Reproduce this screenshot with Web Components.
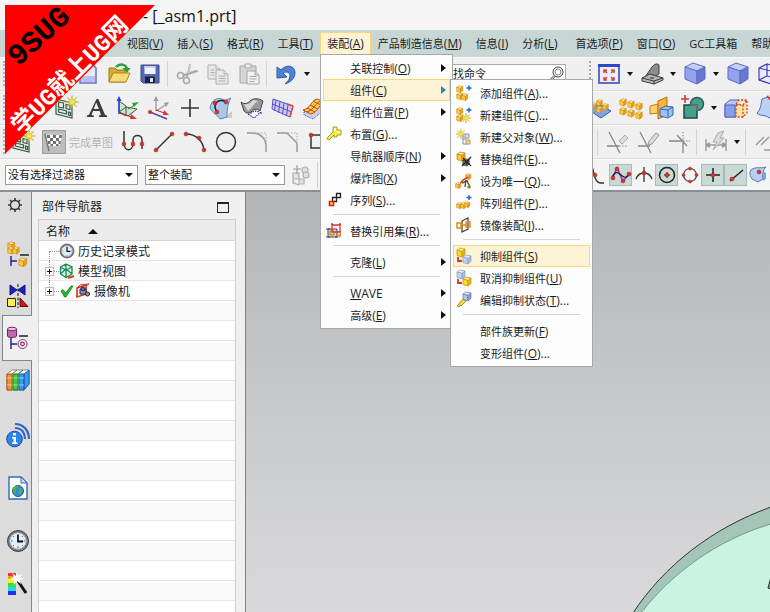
<!DOCTYPE html>
<html lang="zh-CN">
<head>
<meta charset="utf-8">
<title>[_asm1.prt]</title>
<style>
  html, body { margin: 0; height: 100%; }
  body {
    font-family: "Open Sans", "Noto Sans CJK SC", sans-serif;
    font-size: 12px;
    color: #1c1c1c;
    overflow: hidden;
    background: #f0f0f0;
  }
</style>
</head>
<body>
<cad-app></cad-app>

<script>
/* ---------- icon drawings ---------- */
const cube = (x, y, s, a = '#fff0a0', b = '#ffc938', c = '#e9a41c', k = '#cc8814') =>
  `<g transform="translate(${x} ${y}) scale(${s})" stroke="${k}" stroke-width=".8" stroke-linejoin="round">
   <path fill="${a}" d="M1 3 4 1 9 2 6 4.5z"/><path fill="${b}" d="M1 3 6 4.5 6 10 1 8.5z"/><path fill="${c}" d="M6 4.5 9 2 9 7.5 6 10z"/></g>`;
const star = (x, y, s = 1) =>
  `<g transform="translate(${x} ${y}) scale(${s})"><path fill="#f6e94a" stroke="#b3a22c" stroke-width=".5" d="M0-7 1-2 5-5 2-1 7 0 2 1 5 5 1 2 0 7-1 2-5 5-2 1-7 0-2-1-5-5-1-2z"/></g>`;
const dot = (x, y, r = 2) => `<circle cx="${x}" cy="${y}" r="${r}" fill="#d5332b" stroke="#8f1d18" stroke-width=".4"/>`;
const plus = (x, y, c = '#1560e0') => `<path d="M${x - 2.5} ${y}h5M${x} ${y - 2.5}v5" stroke="${c}" stroke-width="1.4"/>`;
const bigCube = `<g stroke="#5e6bc4" stroke-linejoin="round"><path fill="#c3cdf8" d="M2 5 10 1 22 5 14 9z"/><path fill="#93a4ec" d="M2 5 14 9 14 22 2 17z"/><path fill="#6678d0" d="M14 9 22 5 22 17 14 22z"/></g>`;
const clockFace = `<circle cx="12" cy="12" r="10.500" fill="#777" stroke="#444"/><circle cx="12" cy="12" r="8.300" fill="#e4eefb" stroke="#9aa" />
  <path d="M12 5v1.500M12 17.500V19M5 12h1.500M17.500 12H19M7 7l.8.8M17 7l-.8.8M7 17l.8-.8M17 17l-.8-.8" stroke="#456"/><path d="M12 6v6.500h5" fill="none" stroke="#111" stroke-width="1.800"/>`;

const ICONS = {
  newfile: [24, `<path fill="#e8e9fb" stroke="#6a6ec0" stroke-width="1.500" d="M4 2h12l4 4v15H4z"/><path fill="#b9bdf0" d="M5 14h14v6H5z"/>`],
  open: [24, `<path fill="#d9a92c" stroke="#9c7a1c" d="M2 20V6h6l2 2h8v12z"/><path fill="#f7dc74" stroke="#a98528" d="M2 20 6 11h17l-4 9z"/><path fill="none" stroke="#2fa03a" stroke-width="2.500" d="M9 5c4-4 10-3 11 2"/><path fill="#2fa03a" d="M15.500 6h8L20 11z"/>`],
  save: [24, `<path fill="#5468b8" stroke="#3a4a8c" d="M3 3h18v18H5l-2-2z"/><path fill="#f2f4fa" d="M6.500 4h11v8h-11z"/><path fill="#c9cfe6" d="M6.500 4h11v2h-11z"/><path fill="#1c2440" d="M7 14.500h10V21H7z"/><path fill="#dde" d="M12 16h3v4h-3z"/>`],
  cut: [24, `<g fill="none" stroke="#a9a9a9" stroke-width="1.600"><circle cx="5.500" cy="13.500" r="3"/><circle cx="11.500" cy="18.500" r="3"/><path d="m8.500 13 13-4.500M12 15.500 15 2M8 14l15-5"/></g><path d="M13 12 14 3l2-1-1 8z" fill="#ccc"/>`],
  copy: [24, `<g fill="#e9e9e9" stroke="#b0b0b0"><path d="M2 3h8l4 4v10H2z"/><path d="M10 3v4h4"/><path d="M10 8h8l4 4v10H10z"/><path d="M18 8v4h4M12.500 14h7M12.500 16.500h7M12.500 19h7M4.500 8h4M4.500 10.500h4M4.500 13h4"/></g>`],
  paste: [24, `<g fill="#d6d6d6" stroke="#a6a6a6"><path d="M3 4h16v17H3z"/><path fill="#eee" d="M8 2h6v4H8z"/><path fill="#f2f2f2" d="M10 9h8l4 4v9H10z"/><path d="M18 9v4h4M12.500 14.500h7M12.500 17h7M12.500 19.500h5"/></g>`],
  undo: [24, `<path fill="#4d82d6" stroke="#2a5cab" d="M3 5v11l10-1-4-4c4-2 7-1 7 3 0 3-2 5-5 8 6-2 10-6 10-11C21 3 12 2 7 8z"/>`],
  fit: [24, `<path fill="#edf0fc" stroke="#5b6bd0" stroke-width="2" d="M2 3h20v18H2z"/><path fill="#2f48c8" d="M1 2h22v3H1z"/><path stroke="#d8452c" stroke-width="1.500" fill="none" d="m10 11-3-3m0 3V8h3M14 11l3-3m-3 0h3V11M10 15l-3 3m0-3v3h3M14 15l3 3m0-3v3h-3"/>`],
  bracket: [24, `<path fill="#8b8b8b" stroke="#3c3c3c" d="M5 15 12 5c2-3 6-4 7-2v9l-8 5z"/><path fill="#b5b5b5" stroke="#3c3c3c" d="M2 16 10 12l13 4v2L14 22 2 19z"/><path d="m2 16 12 3 9-3M14 19v3" fill="none" stroke="#3c3c3c"/><ellipse cx="12" cy="16" rx="2.500" ry="1" fill="#666"/>`],
  cube: [24, bigCube],
  wirecube: [24, `<path fill="#e8eaff" stroke="#3f3fb8" stroke-width="1.200" d="M2 6 10 2 22 5 22 17 14 22 2 18zM2 6l12 3 8-4M14 9v13M10 2v12L2 18M10 14l12 3"/>`],
  sketch: [24, `<g fill="#e3efe6" stroke="#3c5a49" stroke-width="1.200"><path d="M2 3 18 7v15L2 18z"/><path d="M4.500 6v5l5 1V7zM12 8.500v4l4 1v-4zM4.500 13v3l8 2v-3zM14.500 16v3l2 .5v-3z"/></g>${star(18, 6, .95)}`],
  letter: [24, `<path fill="#3c3c3c" d="M2 21v-1.500l2-.8L11.500 3h1.800l6.700 15.700 2 .8V21h-8v-1.500l2-.6-1.400-4H8L6.500 19l2.300.5V21zM8.700 13h5.200l-2.700-6.600z"/>`],
  datumcsys: [24, `<path fill="#cfe3d2" stroke="#40584a" d="M3 5l7 5v10l-7-4zM3 16l7-5 11 2-9 7z"/><path d="M3 18V4" stroke="#2340d8" stroke-width="1.500"/><path fill="#2340d8" d="m.5 5 2.500-5 2.500 5z"/><path d="m3 17 13 4" stroke="#b02a2a"/><path fill="#d83a30" d="m15 18 6 5h-7z"/><path d="m12 13 7-4" stroke="#2c8f38"/><path fill="#2ca038" d="m16 7 7-1-5 5z"/>`],
  csysgray: [24, `<path d="M9 15V2M9 15l11-7" stroke="#999" stroke-width="1.300"/><path fill="#999" d="m6.500 5 2.500-5 2.500 5zM17 7l5-1-3 5z"/><path d="M9 14l11 4" stroke="#b02a2a"/><path fill="#d83a30" d="m17 14 5 5-6 0z"/><path d="M3 16l17 7" stroke="#6a3fa8" stroke-width="1.500"/>${dot(3, 16, 1.8)}`],
  point: [24, `<path d="M3 12h18M12 3v18" stroke="#333" stroke-width="1.600"/>`],
  curveface: [24, `<path fill="#aaa" opacity=".5" d="M15 22 23 15v7z"/><path fill="#a9c8ec" stroke="#5f83b2" d="M1 12C2 4 9 1 13 3c3 2 6 0 9-1-3 4-4 12-4 19l-7 2C9 19 4 18 1 12z"/><path fill="none" stroke="#222" stroke-width="1.500" d="M17 6C9 2 3 8 8 16"/>${dot(17, 6)}${dot(6, 7)}${dot(8, 16)}`],
  flatten: [24, `<path fill="#9a9a9a" stroke="#444" d="M1 6c4 3 7 1 9-1 3-3 9-3 13 0l-3 10c-3-3-7-2-9 1-3 2-5 1-7-1z"/><path fill="#d7d7d7" d="M4 8c4 1 7-1 9-4l5 1c-4 2-5 6-10 10z"/><path fill="#fff" stroke="#2230a8" stroke-width="1.200" stroke-dasharray="1.500 1" d="M8 18c3 0 4-3 8-3l6 2c-4 0-5 3-8 5z"/>`],
  mesh: [24, `<path fill="#cfcaf5" stroke="#5650cc" d="M2 3 22 10 19 21 1 13zM5 4 3.500 14.500M9 5.500 7.500 17M13 7l-1.500 11.500M17 8.500 15.500 20M1.500 8 20.500 16"/><path fill="none" stroke="#e0483a" stroke-width="1.400" d="M22 10 19 21M16 8l6 2"/>`],
  meshcurve: [24, `<path fill="#c9cfe6" stroke="#3f4aa8" stroke-dasharray="1 1" d="m2 15 7 2L19 7l4 1v5L11 23l-9-4z"/><path fill="#f9d04a" stroke="#c8401e" d="M1 14C8 13 9 5 15 3l8 3c-6 2-7 10-14 12z"/><path fill="none" stroke="#c8401e" d="m5 12 8 4M8 9l8 4M11 5l8 4M5 16C12 14 13 7 19 5"/>`],
  arraypad: [24, `<path fill="#7ea5e6" stroke="#2d5eb0" d="m1 14 10-6 12 7-10 7z"/>${cube(2, 6, .7)}${cube(8, 3, .7)}${cube(8, 10, .7)}${cube(14, 7, .7)}`],
  array: [24, `${cube(0, 2, .8)}${cube(8, 4, .8)}${cube(16, 6, .8)}${cube(0, 11, .8)}${cube(8, 13, .8)}${cube(16, 15, .8)}`],
  mirror: [24, `<path fill="#ffd36a" stroke="#c07a10" d="M0 10 8 8v9l-8 1z"/><path fill="#ffb53a" stroke="#c06a10" d="M8 5 17 1v18l-9 4z"/><path fill="#9dc1f5" stroke="#3a63b0" d="m10 13 5-3 8 1v8l-5 3-8-2zM10 13l8 1v7M18 14l5-3"/>`],
  unite: [24, `<circle cx="16" cy="8" r="6.500" fill="#45a090" stroke="#285f56" stroke-width="1.500"/><path fill="#45a090" stroke="#20483f" stroke-width="1.500" d="M3 9h13v13H3z"/><path d="M9.500 9H16v6" fill="none" stroke="#d1705c"/><path d="M0 3h8M4-1v8" stroke="#d8332b" stroke-width="1.500"/>`],
  sheet: [24, `<path fill="#b9c8f7" stroke="#4c62c2" d="m1 8 5-4h9v13l-3 4H1z"/><path fill="#8c9fe8" stroke="#4c62c2" d="M1 9h10v12H1z"/><path fill="#ffe6a0" stroke="#d63d2b" stroke-width="1.300" stroke-dasharray="2 1.500" d="M12 8 15 4h8v13l-4 4h-7zM12 9h7l4-5M19 9v12"/>`],
  offset: [24, `<path fill="#bcd2f5" stroke="#4a6db8" d="M2 17C6 13 6 8 7 3c4-2 9-2 14 0v14l-7 5c-4-4-8-1-12-5z"/><path d="m12 0 10 11M15-1l8 8" stroke="#d8332b" stroke-width="1.600"/>`],
  flag: [24, `<path fill="#bdbdbd" stroke="#9d9d9d" d="M.5.5h23v23H.5z"/><path fill="#fff" d="M4 5c5-2 8 2 16-1l-2 11c-5 3-9-1-12 1z"/><path fill="#707070" d="M5 5h3v3H5zM11 5h3v3h-3zM17 5h3l-.5 3H17zM8 8h3v3H8zM14 8h3v3h-3zM6 11h2.500v3H6zM11 11h3v3h-3zM16.500 11h2.500l-.5 3h-2zM8.500 14h2.500v2H8.500zM14 14h2.500v2H14z"/><path d="m3 4 4 17" stroke="#777" stroke-width="1.500"/>`],
  profile: [24, `<path fill="none" stroke="#333" stroke-width="1.500" d="M3 1v12c0 9 9 9 9 0V10c0-6 9-6 9 0v9"/>${dot(3, 14)}${dot(12, 14)}${dot(21, 14)}`],
  line: [24, `<path stroke="#333" stroke-width="1.500" d="M4 20 20 4"/>${dot(4, 20)}${dot(20, 4)}`],
  arc: [24, `<path fill="none" stroke="#333" stroke-width="1.500" d="M3 4c10 0 17 7 18 16"/>${dot(3, 4)}${dot(16, 8)}${dot(21, 20)}`],
  circle: [24, `<circle cx="12" cy="12" r="9.500" fill="none" stroke="#333" stroke-width="1.500"/>`],
  fillet: [24, `<path fill="none" stroke="#999" stroke-width="1.500" d="M2 3h5c9 0 14 6 14 13v6"/><path stroke="#aaa" stroke-dasharray="1.500 1.500" fill="none" d="M10 3h11v10"/>`],
  chamfer: [24, `<path fill="none" stroke="#999" stroke-width="1.500" d="M1 3h10l10 10v9"/><path stroke="#aaa" stroke-dasharray="1.500 1.500" fill="none" d="M12 3h9v9"/>`],
  rect: [24, `<path fill="none" stroke="#333" stroke-width="1.500" d="M4 5h16v13H4z"/>${dot(4, 5)}${dot(20, 18)}`],
  trim: [24, `<path fill="none" stroke="#888" stroke-width="1.300" d="M4 2 15 23M2 16h12"/><path stroke="#888" stroke-dasharray="1.500 1.500" d="M14 16h9"/><path fill="#ddd" stroke="#aaa" d="m14 11 6-6 3 3-6 6z"/>`],
  extend: [24, `<path fill="none" stroke="#888" stroke-width="1.300" d="m4 2 11 21M2 16h12"/><path fill="#ddd" stroke="#999" d="m12 15 1-4 7-8 3 2-7 9z"/>`],
  corner: [24, `<path fill="none" stroke="#888" stroke-width="1.300" d="M2 11h14v12M10 5l10 11"/><path fill="none" stroke="#888" stroke-dasharray="1.500 1.500" d="M16 2v9h7"/>`],
  dimension: [24, `<path fill="none" stroke="#999" stroke-width="1.400" d="M2 9v12M22 9v12M2 15h20M2 15l4-2M2 15l4 2M22 15l-4-2m4 2-4 2"/><path fill="#ddd" stroke="#aaa" d="m14 3 6-2-4 7h4L9 20l4-8H9z"/>`],
  parallel: [24, `<path fill="none" stroke="#999" stroke-width="1.400" d="m3 15 8-8M8 15l8-8M11 20h12M18 12v8"/>`],
  addcomp: [24, `<g stroke="#b0b0b0" fill="#e2e2e2" stroke-width="1.200"><path d="M1 10h6v6H1zM7 16h5v5H7zM1 16v4l6 2"/><circle cx="13" cy="7" r="3"/><circle cx="14" cy="12" r="3"/><path d="M1 6h8M5 2v9" stroke="#999"/></g>`],
  snap1: [24, `<path fill="none" stroke="#333" stroke-width="1.300" d="M4 2c5 0 2 18 11 18h3"/>${dot(9, 12)}`],
  spline: [24, `<path fill="none" stroke="#9a2fd0" stroke-width="1.600" d="m3 16 5-11 6 13 7-8"/><path fill="none" stroke="#222" stroke-width="1.200" d="M3 14c3-5 5-6 9-2s6 2 9-1"/>${dot(4, 15)}${dot(8, 6)}${dot(14, 18)}${dot(20, 11)}`],
  mid: [24, `<path fill="none" stroke="#333" stroke-width="1.300" d="M4 16c3-8 13-8 16 0M12 4v15"/>${dot(12, 10)}`],
  center: [24, `<circle cx="12" cy="12" r="7.500" fill="none" stroke="#222" stroke-width="1.500"/><path d="M9 12h6M12 9v6" stroke="#222"/>${dot(12, 12)}`],
  quadrant: [24, `<circle cx="12" cy="12" r="6.500" fill="none" stroke="#444" stroke-width="1.200"/>${dot(12, 5.5, 1.6)}${dot(12, 18.5, 1.6)}${dot(5.5, 12, 1.6)}${dot(18.5, 12, 1.6)}`],
  exist: [24, `<path d="M5 12h14M12 5v14" stroke="#222" stroke-width="1.500"/>${dot(12, 12)}`],
  oncurve: [24, `<path d="M6 18 19 7" stroke="#222" stroke-width="1.500"/>${dot(8, 16)}`],
  onface: [24, `<path fill="#b5d0f2" stroke="#5579ad" d="M4 7C9 3 13 6 19 4c-3 3-4 8-3 12l-5 3-6-3c-2-3-3-6-1-9z"/><path fill="#7ea3d8" d="m16 8 3 2v6l-3 2z"/>${dot(12, 9)}`],
  search: [16, `<circle cx="10" cy="6" r="5" fill="none" stroke="#444"/><circle cx="10" cy="6" r="3" fill="none" stroke="#888"/><path d="m6 9.500-5 5 1.500 1L7.500 10" fill="none" stroke="#444"/>`],

  mAdd: [16, `${cube(0, 0, .75)}${cube(0, 7, .75)}${cube(5, 8, .75)}${plus(13, 3)}`],
  mNew: [16, `${cube(0, 0, .75)}${cube(0, 7, .75)}${plus(13, 3)}${star(10, 11, .75)}`],
  mParent: [16, `${star(5, 5, .75)}<path d="M7 6v9h4M7 10h4" stroke="#88a" fill="none"/><path fill="#d8dcf5" stroke="#99a" d="M9 5h4v4H9z"/><path fill="#f3df58" stroke="#a98" d="M10 11h4v4h-4z"/>`],
  mReplace: [16, `${cube(0, 0, 1)}${cube(6, 7, .8, '#aaa', '#777', '#555', '#333')}<path d="m7 7 8 8M15 6l-9 9" stroke="#222" stroke-width="1.200"/>`],
  mUnique: [16, `${cube(9, 0, .65)}<path d="m6 10 5-2 3 6M10 7l-1 7" stroke="#553" fill="none" stroke-width="1.400"/><path d="m3 12 4-5 5-3" stroke="#e04020" fill="none" stroke-width="1.500"/>${cube(-1, 9, .65)}<circle cx="13" cy="14" r="1.800" fill="#8a8a40"/>`],
  mArray: [16, `${cube(0, 7, .65)}${cube(4, 7, .65)}${cube(8, 6, .65)}${plus(13, 2.5)}`],
  mMirror: [16, `<path fill="#fff" stroke="#444" stroke-width="1.300" d="m6 4 6-3v11l-6 3z"/><path fill="none" stroke="#e58a10" stroke-width="1.500" d="M1 6h4v5H1zM10 5h4v5h-4zM5 8h5"/>`],
  mSuppress: [16, `${cube(0, -1, 1, '#fff59a', '#f8dc28', '#e2b816', '#c99a12')}<path d="M2 9v4h4" stroke="#d63b20" stroke-width="1.800" fill="none"/>${cube(6, 6, 1, '#e8eefa', '#c3d1ee', '#a9bce0', '#8fa3cb')}`],
  mUnsuppress: [16, `${cube(0, -1, 1, '#e8eefa', '#c3d1ee', '#a9bce0', '#8fa3cb')}<path d="M2 9v4h4" stroke="#d63b20" stroke-width="1.800" fill="none"/>${cube(6, 6, 1, '#fff59a', '#f8dc28', '#e2b816', '#c99a12')}`],
  mEdit: [16, `${cube(6, -1, 1, '#e8eefa', '#b3c4ec', '#8ba3d6', '#6b83b3')}<path fill="#f6dc3a" stroke="#8b7a20" stroke-width=".8" d="m1 14 6-7 3 2-5 5-1-1-1 2z"/>`],
  mArrange: [16, `<path fill="#f6ec4a" stroke="#8e8a28" stroke-width=".8" d="M7 1h4v3h4v5h-4v2H8V9l-5 5-2-1 1-2 5-5z"/><path fill="#ffffc8" d="M8 2h2v3H8zM11 5h3v2h-3z"/>`],
  mSequence: [16, `<g stroke-width="1.300"><path fill="#fff" stroke="#222" d="M10.500 1.500h4v4h-4zM6.500 5.500h4v4h-4z"/><path fill="#ffe14a" stroke="#e01818" stroke-width="1.600" d="M3.500 9.500h4v4h-4z"/></g>`],
  mRefset: [16, `<path fill="#c9d4ee" stroke="#445" d="M2 6h9v8H2zM0 6h4M0 14h4M9 14h3"/><path fill="#f8c84a" stroke="#b8801a" d="M4 8h4v4H4z"/><path fill="none" stroke="#e03030" stroke-width="1.300" d="M6 2h8v7H6zM5 1h2M13 1h2M14 9h1"/><path fill="#e88a20" d="m12 12 3-3v4l-2 2z"/>`],

  gear: [16, `<circle cx="8" cy="8" r="4.500" fill="none" stroke="#333" stroke-width="1.400"/><path d="M8 1v3M8 12v3M1 8h3M12 8h3M3 3l2 2M11 11l2 2M13 3l-2 2M5 11l-2 2" stroke="#333" stroke-width="1.600"/>`],
  rAsm: [24, `${cube(1, -1, .85)}${cube(1, 4, .8)}${cube(6, 4, .8)}<path d="M5 14v10M5 19h6" stroke="#1c1c9a" stroke-width="1.400"/><path d="M14 13h9" stroke="#111" stroke-width="1.400"/>${cube(12, 15, .95)}`],
  rCons: [24, `<path fill="#1c22c8" stroke="#101478" d="M4 1v10l7-5zM19 1v10l-7-5z"/><path d="M12 0v24" stroke="#111" stroke-dasharray="3 1.500"/><path fill="#fff04a" stroke="#222" d="M1.500 14.500h8v8h-8z"/><path fill="#d01818" stroke="#6a0808" d="M14 14l8 8.500h-8z"/>`],
  rPart: [24, `<path fill="#c56aa8" stroke="#7a1f62" d="M1.500 3v7c0 2 9 2 9 0V3"/><ellipse cx="6" cy="3" rx="4.500" ry="1.800" fill="#ecc3e0" stroke="#7a1f62"/><path d="M5 12v11M5 18h6" stroke="#1c1c9a" stroke-width="1.400"/><path d="M13 10h9" stroke="#111" stroke-width="1.400"/><circle cx="16.500" cy="18" r="4.500" fill="#fff" stroke="#8a1f6a"/><circle cx="16.500" cy="18" r="1.800" fill="none" stroke="#8a1f6a" stroke-width="1.200"/>`],
  rBooks: [24, `<path fill="#fff" stroke="#777" stroke-width=".8" d="m1 6 5-4h17v14l-5 6H1z"/><path fill="#f2912c" stroke="#a8560c" d="M1 6h5v16H1z"/><path fill="#42cc3a" stroke="#16801a" d="M7 6h5v16H7z"/><path fill="#3a9be8" stroke="#155fae" d="M13 6h5v16h-5zM18 6l5-4v14l-5 6z"/><path d="M1 10h5M1 17h5M7 10h5M7 17h5M13 10h5M13 17h5" stroke="#fff" stroke-opacity=".5"/><path d="m6 6 5-4" stroke="#a8560c"/><path d="m12 6 5-4" stroke="#16801a"/>`],
  rInfo: [24, `<g fill="none" stroke="#2f66c8" stroke-width="2.200"><path d="M9 1c8 0 14 6 14 15M9 5c7 0 10 5 10 11"/></g><circle cx="8.500" cy="16" r="7.800" fill="#2a86e8" stroke="#1a4fa0"/><path fill="#fff" d="M7 10h3v2.500H7zM6 14h4v5.500h1.500V21H6v-1.500h1.500V15.500H6z"/>`],
  rPage: [24, `<path fill="#fff" stroke="#3568b8" stroke-width="1.400" d="M3 1h12l6 6v16H3z"/><path fill="#cfdcf2" stroke="#3568b8" d="M15 1v6h6z"/><circle cx="12" cy="15" r="5.500" fill="#3a86d8" stroke="#235a98"/><path fill="#4cb83a" d="M8 11c2-2 4-1 4 0s-3 1-2 4-2 3-3 0 0-3 1-4zm6 1c3 1 3 5 1 6s-3-1-2-3 0-2 1-3z"/>`],
  rClock: [24, clockFace],
  rWand: [24, `<path fill="#f33" d="M2 1h8v4H2z"/><path fill="#f9a21a" d="M2 4h8v3H2z"/><path fill="#f8f020" d="M2 7h8v4H2z"/><path fill="#38e038" d="M2 11h8v4H2z"/><path fill="#20d8e8" d="M2 15h8v4H2z"/><path fill="#2030f0" d="M2 19h8v4H2z"/><path d="m12 9 8 12" stroke="#111" stroke-width="3"/><path fill="#fff" d="m11 0 1 4 4-2-2 4 4 1-4 1 1 4-4-3-3 4v-5l-4-1 4-2-2-4 4 3z"/>`],
  tClock: [16, `<g transform="scale(.6667)">${clockFace}</g>`],
  tView: [16, `<path fill="#d8f3e2" stroke="#1a8a50" stroke-width="1.300" d="m1.500 4 5.500-3 6 3v7l-6 3.500-5.500-3.500zM1.500 4 7 7l6-3M7 7v7M7 1v5l-5.500 5M7 6l6 5"/><path d="m9 15 6-2" stroke="#e03a1a" stroke-width="2"/>`],
  tCheck: [16, `<path fill="#25b52c" stroke="#148a1c" stroke-width=".8" d="m2 8 2-1.500L6.500 10 12 3h2L7 14H5.500z"/>`],
  tCam: [16, `<path fill="#fff" stroke="#e0301a" stroke-width="1.600" d="M2 5 11 2v9L2 14z"/><path fill="#8a9be0" stroke="#223" d="M5 6h6v5H5z"/><circle cx="8" cy="6" r="2" fill="#5a70c8" stroke="#222"/><circle cx="12.500" cy="11" r="2" fill="#999" stroke="#222"/><path fill="none" stroke="#e0301a" d="M2 5l3-3 9-1-3 2"/>`]
};

/* ---------- component base ---------- */
function define(name, render) {
  customElements.define(name, class extends HTMLElement {
    connectedCallback() {
      if (this.shadowRoot) return;
      const t = document.createElement('template');
      t.innerHTML = render(this);
      this.attachShadow({ mode: 'open' }).append(t.content.cloneNode(true));
    }
  });
}
const attr = (el, n) => el.getAttribute(n) || '';
const BUTTON_RESET = `button { all: unset; box-sizing: border-box; cursor: default; }`;
const CJK_LABEL = `.label { font-size: 11px; white-space: nowrap; } .latin { font-size: 12px; } u { text-underline-offset: 1px; }`;
const labelOf = el => {
  const text = attr(el, 'text'), key = attr(el, 'key');
  if (el.hasAttribute('latin')) return `<span class="label"><span class="latin"><u>${text[0]}</u>${text.slice(1)}</span></span>`;
  return `<span class="label">${text}${key ? `<span class="latin">(<u>${key}</u>)${el.hasAttribute('more') ? '...' : ''}</span>` : ''}</span>`;
};

define('ug-icon', el => {
  const [size, body] = ICONS[attr(el, 'name')];
  return `<style>:host{display:block;flex:none;width:${size}px;height:${size}px} svg{display:block;overflow:visible}</style>
  <svg width="${size}" height="${size}" viewBox="0 0 ${size} ${size}" aria-hidden="true">${body}</svg>`;
});

/* ---------- title and menus ---------- */
define('title-bar', () => `
  <style>
    :host { display: flex; align-items: center; height: 30px; padding: 2px 0 0 143px; box-sizing: border-box; background: #f5f5f5; font-size: 16px; color: #111; }
  </style><slot></slot>`);

define('menu-bar', () => `
  <style>
    :host { display: flex; align-items: flex-start; box-sizing: border-box; height: 27px; padding: 2px 0 0 120px; background: #c8d7d5; position: relative; z-index: 5; }
  </style><slot></slot>`);

define('menu-entry', el => `
  <style>
    ${BUTTON_RESET} ${CJK_LABEL}
    :host { display: block; flex: none; position: relative; }
    :host([group]) { margin-left: 4px; }
    button { display: flex; align-items: center; height: 22px; padding: 0 6px; border: 1px solid transparent; }
    :host([open]) button { background: #fdf4d8; border-color: #f7d776; border-bottom: 0; }
    ::slotted(ug-menu) { position: absolute; left: 0; top: 100%; }
  </style>
  <button type="button">${labelOf(el)}</button><slot></slot>`);

define('ug-menu', () => `
  <style>
    :host { display: block; width: max-content; padding: 2px; background: #fdfdfd; border: 1px solid #a6a8aa; }
  </style><slot></slot>`);

define('menu-item', el => `
  <style>
    ${BUTTON_RESET} ${CJK_LABEL}
    :host { display: block; position: relative; }
    button { display: flex; align-items: center; width: 100%; height: 22px; padding: 0 20px 0 2px; border: 1px solid transparent; }
    :host([active]) button { background: #fdf4d8; border-color: #f7d776; }
    .icon { width: 16px; margin-right: 8px; }
    .arrow { position: absolute; right: 4px; top: 7px; border: 4px solid transparent; border-left: 5px solid #111; border-right: 0; }
    :host([active]) .arrow { border-left-color: #2b86b4; }
    ::slotted(ug-menu) { position: absolute; left: 100%; top: 0; z-index: 2; }
  </style>
  <button type="button"><span class="icon">${attr(el, 'icon') ? `<ug-icon name="${attr(el, 'icon')}"></ug-icon>` : ''}</span>${labelOf(el)}${el.hasAttribute('sub') ? '<span class="arrow"></span>' : ''}</button><slot></slot>`);

define('menu-rule', () => `<style>:host{display:block;height:1px;margin:3px 10px 5px 10px;background:#d4d4d4}</style>`);

/* ---------- toolbars ---------- */
define('tool-row', () => `
  <style>
    :host { display: flex; box-sizing: border-box; height: 34px; border-bottom: 1px solid #dcdcdc; background: #f0f0f0; box-shadow: inset 0 1px #fafafa; overflow: hidden; }
    :host([filter]) { height: 33px; background: #f4f4f4; border-bottom: 2px solid #859194; }
    .main, .dock { display: flex; align-items: center; min-width: 0; }
    .main { flex: 1; padding-left: var(--lead, 0); position: relative; }
    .main::before { content: ""; position: absolute; left: 3px; top: 4px; bottom: 4px; border-left: 2px dotted #b0b0b0; }
    :host([filter]) .main::before { display: none; }
    .dock { flex: 0 0 186px; overflow: hidden; }
  </style>
  <div class="main"><slot></slot></div><div class="dock"><slot name="dock"></slot></div>`);
define('tool-group', () => `<style>:host{display:flex;align-items:center;flex:none;height:100%;padding-left:var(--dock-lead,0)}</style><slot></slot>`);

define('tool-button', el => `
  <style>
    ${BUTTON_RESET}
    :host { display: flex; flex: none; }
    button { display: flex; align-items: center; justify-content: center; width: 31px; height: 28px; }
    :host([snap]) button { width: 23px; height: 22px; }
    :host([on]) button { background: #c9d9d6; border: 1px solid #a9bab7; }
    .drop { width: 12px; }
    .drop::after { content: ""; border: 3px solid transparent; border-top: 4px solid #111; border-bottom: 0; }
  </style>
  <button type="button" aria-label="${attr(el, 'icon')}"><ug-icon name="${attr(el, 'icon')}"></ug-icon></button>
  ${el.hasAttribute('drop') ? '<button type="button" class="drop" aria-label="drop"></button>' : ''}`);

define('tool-rule', () => `<style>:host{flex:none;width:1px;height:26px;margin:0 3px 0 2px;background:#d2d2d2}</style>`);
define('tool-grip', () => `<style>:host{flex:none;height:26px;margin:0 2px 0 1px;border-left:2px dotted #aaa}</style>`);
define('tool-label', () => `<style>:host{flex:none;font-size:11px;color:#b4b4b4;padding-right:4px;width:44px;white-space:nowrap}</style><slot></slot>`);

define('search-box', () => `
  <style>
    :host { display: flex; align-items: center; width: 122px; height: 18px; margin-left: auto; margin-right: 18px; padding: 0 1px; background: #fff; border: 1px solid #a9a9a9; flex: none; }
    input { all: unset; flex: 1; min-width: 0; font-size: 11px; line-height: 18px; color: #222; }
  </style>
  <input type="text" value="查找命令" aria-label="查找命令"><ug-icon name="search"></ug-icon>`);

define('filter-select', el => `
  <style>
    :host { display: block; flex: none; margin-right: 7px; position: relative; }
    select { appearance: none; display: block; box-sizing: border-box; width: var(--w); height: 20px; padding: 0 20px 0 2px; border: 1px solid #9a9a9a; border-radius: 0; background: #fff; font: inherit; font-size: 11px; color: #111; }
    :host::after { content: ""; position: absolute; right: 5px; top: 8px; border: 4px solid transparent; border-top-color: #111; border-bottom: 0; }
  </style>
  <select aria-label="${attr(el, 'value')}"><option>${attr(el, 'value')}</option></select>`);

/* ---------- resource bar ---------- */
define('resource-bar', () => `
  <style>
    :host { display: flex; flex-direction: column; box-sizing: border-box; width: 32px; flex: none; background: #dcdcdc; box-shadow: inset -1px 0 #7f8a8c; }
    ::slotted([space="large"]) { margin-bottom: 16px; }
    ::slotted([space="small"]) { margin-bottom: 7px; }
  </style><slot></slot>`);
define('resource-tab', el => `
  <style>
    ${BUTTON_RESET}
    :host { display: block; flex: none; height: 42px; }
    :host([size="slim"]) { height: 25px; }
    :host([size="tall"]) { height: 53px; }
    :host([size="end"]) { height: 34px; }
    button { display: flex; align-items: center; justify-content: center; width: 100%; height: 100%; padding-left: 3px; }
    :host([size="slim"]) button { padding: 0 4px 0 2px; }
    :host([active]) { height: 46px; margin: -2px 0 -2px 2px; }
    :host([active]) button { background: #f0f0f0; border: 1px solid #7f8a8c; border-right: 0; padding: 0; }
  </style>
  <button type="button" aria-label="${attr(el, 'icon')}"><ug-icon name="${attr(el, 'icon')}"></ug-icon></button>`);

/* ---------- navigator ---------- */
define('part-navigator', () => `
  <style>
    ${BUTTON_RESET}
    :host { display: flex; flex-direction: column; box-sizing: border-box; width: 214px; flex: none; padding: 0 9px 0 6px; background: #f0f0f0; border-right: 1px solid #76848a; }
    header { display: flex; align-items: center; justify-content: space-between; height: 27px; padding: 0 7px 0 4px; }
    .max { width: 12px; height: 11px; border: 1px solid #222; border-top-width: 2px; margin-top: 3px; }
    .tree { flex: 1; display: flex; flex-direction: column; border: 1px solid #cfcfcf; border-bottom: 0; }
    .head { display: flex; align-items: center; gap: 18px; height: 21px; padding: 2px 0 0 7px; background: #ececec; border-bottom: 1px solid #d5d5d5; }
    .head::after { content: ""; border: 5px solid transparent; border-bottom-color: #111; border-top: 0; }
    .rows { flex: 1; background: repeating-linear-gradient(#fff 0 19px, #e6e6e6 19px 20px, #fafafa 20px 39px, #e6e6e6 39px 40px); }
  </style>
  <header><span>部件导航器</span><button class="max" type="button" aria-label="max"></button></header>
  <div class="tree"><button class="head" type="button">名称</button><div class="rows" role="tree"><slot></slot></div></div>`);

define('tree-row', el => `
  <style>
    ${BUTTON_RESET}
    :host { display: flex; align-items: center; height: 20px; padding-left: 6px; }
    .node { position: relative; width: 14px; height: 20px; flex: none; }
    .node::before { content: ""; position: absolute; left: 4px; top: 0; height: 100%; border-left: 1px dotted #999; }
    .node::after { content: ""; position: absolute; left: 5px; right: 0; top: 10px; border-top: 1px dotted #999; }
    :host([first]) .node::before { top: 10px; height: 10px; }
    :host([last]) .node::before { height: 10px; }
    button { position: absolute; z-index: 1; left: 0; top: 6px; width: 9px; height: 9px; background: linear-gradient(#111, #111) center / 5px 1px no-repeat, linear-gradient(#111, #111) center / 1px 5px no-repeat, #fff; border: 1px solid #bbb; }
    .text { margin-left: 3px; white-space: nowrap; }
  </style>
  <span class="node">${el.hasAttribute('expand') ? '<button type="button" aria-label="+"></button>' : ''}</span>
  ${attr(el, 'icons').split(' ').map(n => `<ug-icon name="${n}"></ug-icon>`).join('')}
  <span class="text"><slot></slot></span>`);

/* ---------- graphics area ---------- */
define('graphics-view', () => `
  <style>
    :host { display: block; flex: 1; position: relative; overflow: hidden; background: linear-gradient(#b3b4b5, #c2c3c5 35%, #cecfd1 68%, #d9d9db); }
    svg { position: absolute; right: 0; bottom: 0; }
  </style>
  <svg width="170" height="132" viewBox="0 0 170 132" aria-hidden="true">
    <path fill="#a5c5b8" stroke="#2c3833" d="M33 133C64 86 112 48 171 27V133z"/>
    <path fill="#caf3e2" stroke="#759c8d" d="M41 133C70 95 116 60 171 44V133z"/>
    <path fill="#8fb0a3" stroke="#222" d="M171 97 168 108 171 109z"/>
  </svg>`);

define('corner-ribbon', () => `
  <style>
    :host { position: absolute; left: 5px; top: 5px; z-index: 10; pointer-events: none; }
    svg { display: block; }
    text { font-family: "Liberation Mono", "Noto Sans CJK SC", monospace; font-weight: 700; }
  </style>
  <svg width="150" height="150" viewBox="0 0 150 150">
    <path fill="#f00" d="M0 0H150L0 149z"/>
    <text transform="translate(13 62) rotate(-42)" font-size="30" fill="#000">9SUG</text>
    <text transform="translate(16 130) rotate(-45)" font-size="24" fill="#fff">学UG就上UG网</text>
  </svg>`);

/* ---------- application ---------- */
const B = (names, extra = '') => names.split(' ').map(n => {
  if (n === '|') return '<tool-rule></tool-rule>';
  const drop = n.endsWith('+'), on = n.endsWith('!');
  return `<tool-button icon="${n.replace(/[+!]/, '')}"${drop ? ' drop' : ''}${on ? ' on' : ''}${extra}></tool-button>`;
}).join('');

define('cad-app', () => `
  <style>
    :host { display: flex; flex-direction: column; height: 100vh; position: relative; overflow: hidden; }
    main { display: flex; flex: 1; min-height: 0; }
  </style>
  <title-bar>- [_asm1.prt]</title-bar>
  <menu-bar>
    <menu-entry text="视图" key="V"></menu-entry>
    <menu-entry text="插入" key="S"></menu-entry>
    <menu-entry text="格式" key="R"></menu-entry>
    <menu-entry text="工具" key="T"></menu-entry>
    <menu-entry text="装配" key="A" open>
      <ug-menu>
        <menu-item text="关联控制" key="O" sub></menu-item>
        <menu-item text="组件" key="C" sub active>
          <ug-menu>
            <menu-item icon="mAdd" text="添加组件" key="A" more></menu-item>
            <menu-item icon="mNew" text="新建组件" key="C" more></menu-item>
            <menu-item icon="mParent" text="新建父对象" key="W" more></menu-item>
            <menu-item icon="mReplace" text="替换组件" key="E" more></menu-item>
            <menu-item icon="mUnique" text="设为唯一" key="Q" more></menu-item>
            <menu-item icon="mArray" text="阵列组件" key="P" more></menu-item>
            <menu-item icon="mMirror" text="镜像装配" key="I" more></menu-item>
            <menu-rule></menu-rule>
            <menu-item icon="mSuppress" text="抑制组件" key="S" active></menu-item>
            <menu-item icon="mUnsuppress" text="取消抑制组件" key="U"></menu-item>
            <menu-item icon="mEdit" text="编辑抑制状态" key="T" more></menu-item>
            <menu-rule></menu-rule>
            <menu-item text="部件族更新" key="F"></menu-item>
            <menu-item text="变形组件" key="O" more></menu-item>
          </ug-menu>
        </menu-item>
        <menu-item text="组件位置" key="P" sub></menu-item>
        <menu-item icon="mArrange" text="布置" key="G" more></menu-item>
        <menu-item text="导航器顺序" key="N" sub></menu-item>
        <menu-item text="爆炸图" key="X" sub></menu-item>
        <menu-item icon="mSequence" text="序列" key="S" more></menu-item>
        <menu-rule></menu-rule>
        <menu-item icon="mRefset" text="替换引用集" key="R" more></menu-item>
        <menu-rule></menu-rule>
        <menu-item text="克隆" key="L" sub></menu-item>
        <menu-rule></menu-rule>
        <menu-item text="WAVE" latin sub></menu-item>
        <menu-item text="高级" key="E" sub></menu-item>
      </ug-menu>
    </menu-entry>
    <menu-entry text="产品制造信息" key="M"></menu-entry>
    <menu-entry text="信息" key="I"></menu-entry>
    <menu-entry text="分析" key="L"></menu-entry>
    <menu-entry text="首选项" key="P" group></menu-entry>
    <menu-entry text="窗口" key="O"></menu-entry>
    <menu-entry text="GC工具箱"></menu-entry>
    <menu-entry text="帮助"></menu-entry>
  </menu-bar>

  <tool-row style="--lead: 72px">
    ${B('newfile open save | cut copy paste | undo+')}<search-box></search-box>
    <tool-group slot="dock" style="--dock-lead: 4px"><tool-grip></tool-grip>${B('fit+ bracket+ cube+ cube wirecube')}</tool-group>
  </tool-row>
  <tool-row style="--lead: 50px">
    ${B('sketch letter datumcsys csysgray point curveface flatten mesh meshcurve')}
    <tool-group slot="dock">${B('arraypad array mirror unite+ sheet offset')}</tool-group>
  </tool-row>
  <tool-row style="--lead: 7px">
    ${B('sketch flag')}<tool-label>完成草图</tool-label>${B('profile line arc circle fillet chamfer rect')}
    <tool-group slot="dock" style="--dock-lead: 11px">${B('| trim extend corner | dimension+ | parallel')}</tool-group>
  </tool-row>
  <tool-row filter style="--lead: 5px">
    <filter-select value="没有选择过滤器" style="--w: 133px"></filter-select>
    <filter-select value="整个装配" style="--w: 140px"></filter-select>
    ${B('addcomp', ' snap')}<tool-rule></tool-rule>
    <tool-group slot="dock" style="--dock-lead: 2px">${B('snap1 spline! mid center! quadrant exist! oncurve! onface', ' snap')}</tool-group>
  </tool-row>

  <main>
    <resource-bar>
      <resource-tab icon="gear" size="slim" space="large"></resource-tab>
      <resource-tab icon="rAsm"></resource-tab>
      <resource-tab icon="rCons"></resource-tab>
      <resource-tab icon="rPart" active></resource-tab>
      <resource-tab icon="rBooks" space="small"></resource-tab>
      <resource-tab icon="rInfo" size="tall"></resource-tab>
      <resource-tab icon="rPage" size="tall"></resource-tab>
      <resource-tab icon="rClock" size="tall"></resource-tab>
      <resource-tab icon="rWand" size="end"></resource-tab>
    </resource-bar>
    <part-navigator>
      <tree-row icons="tClock" first>历史记录模式</tree-row>
      <tree-row icons="tView" expand>模型视图</tree-row>
      <tree-row icons="tCheck tCam" expand last>摄像机</tree-row>
    </part-navigator>
    <graphics-view></graphics-view>
  </main>
  <corner-ribbon></corner-ribbon>`);
</script>
</body>
</html>
